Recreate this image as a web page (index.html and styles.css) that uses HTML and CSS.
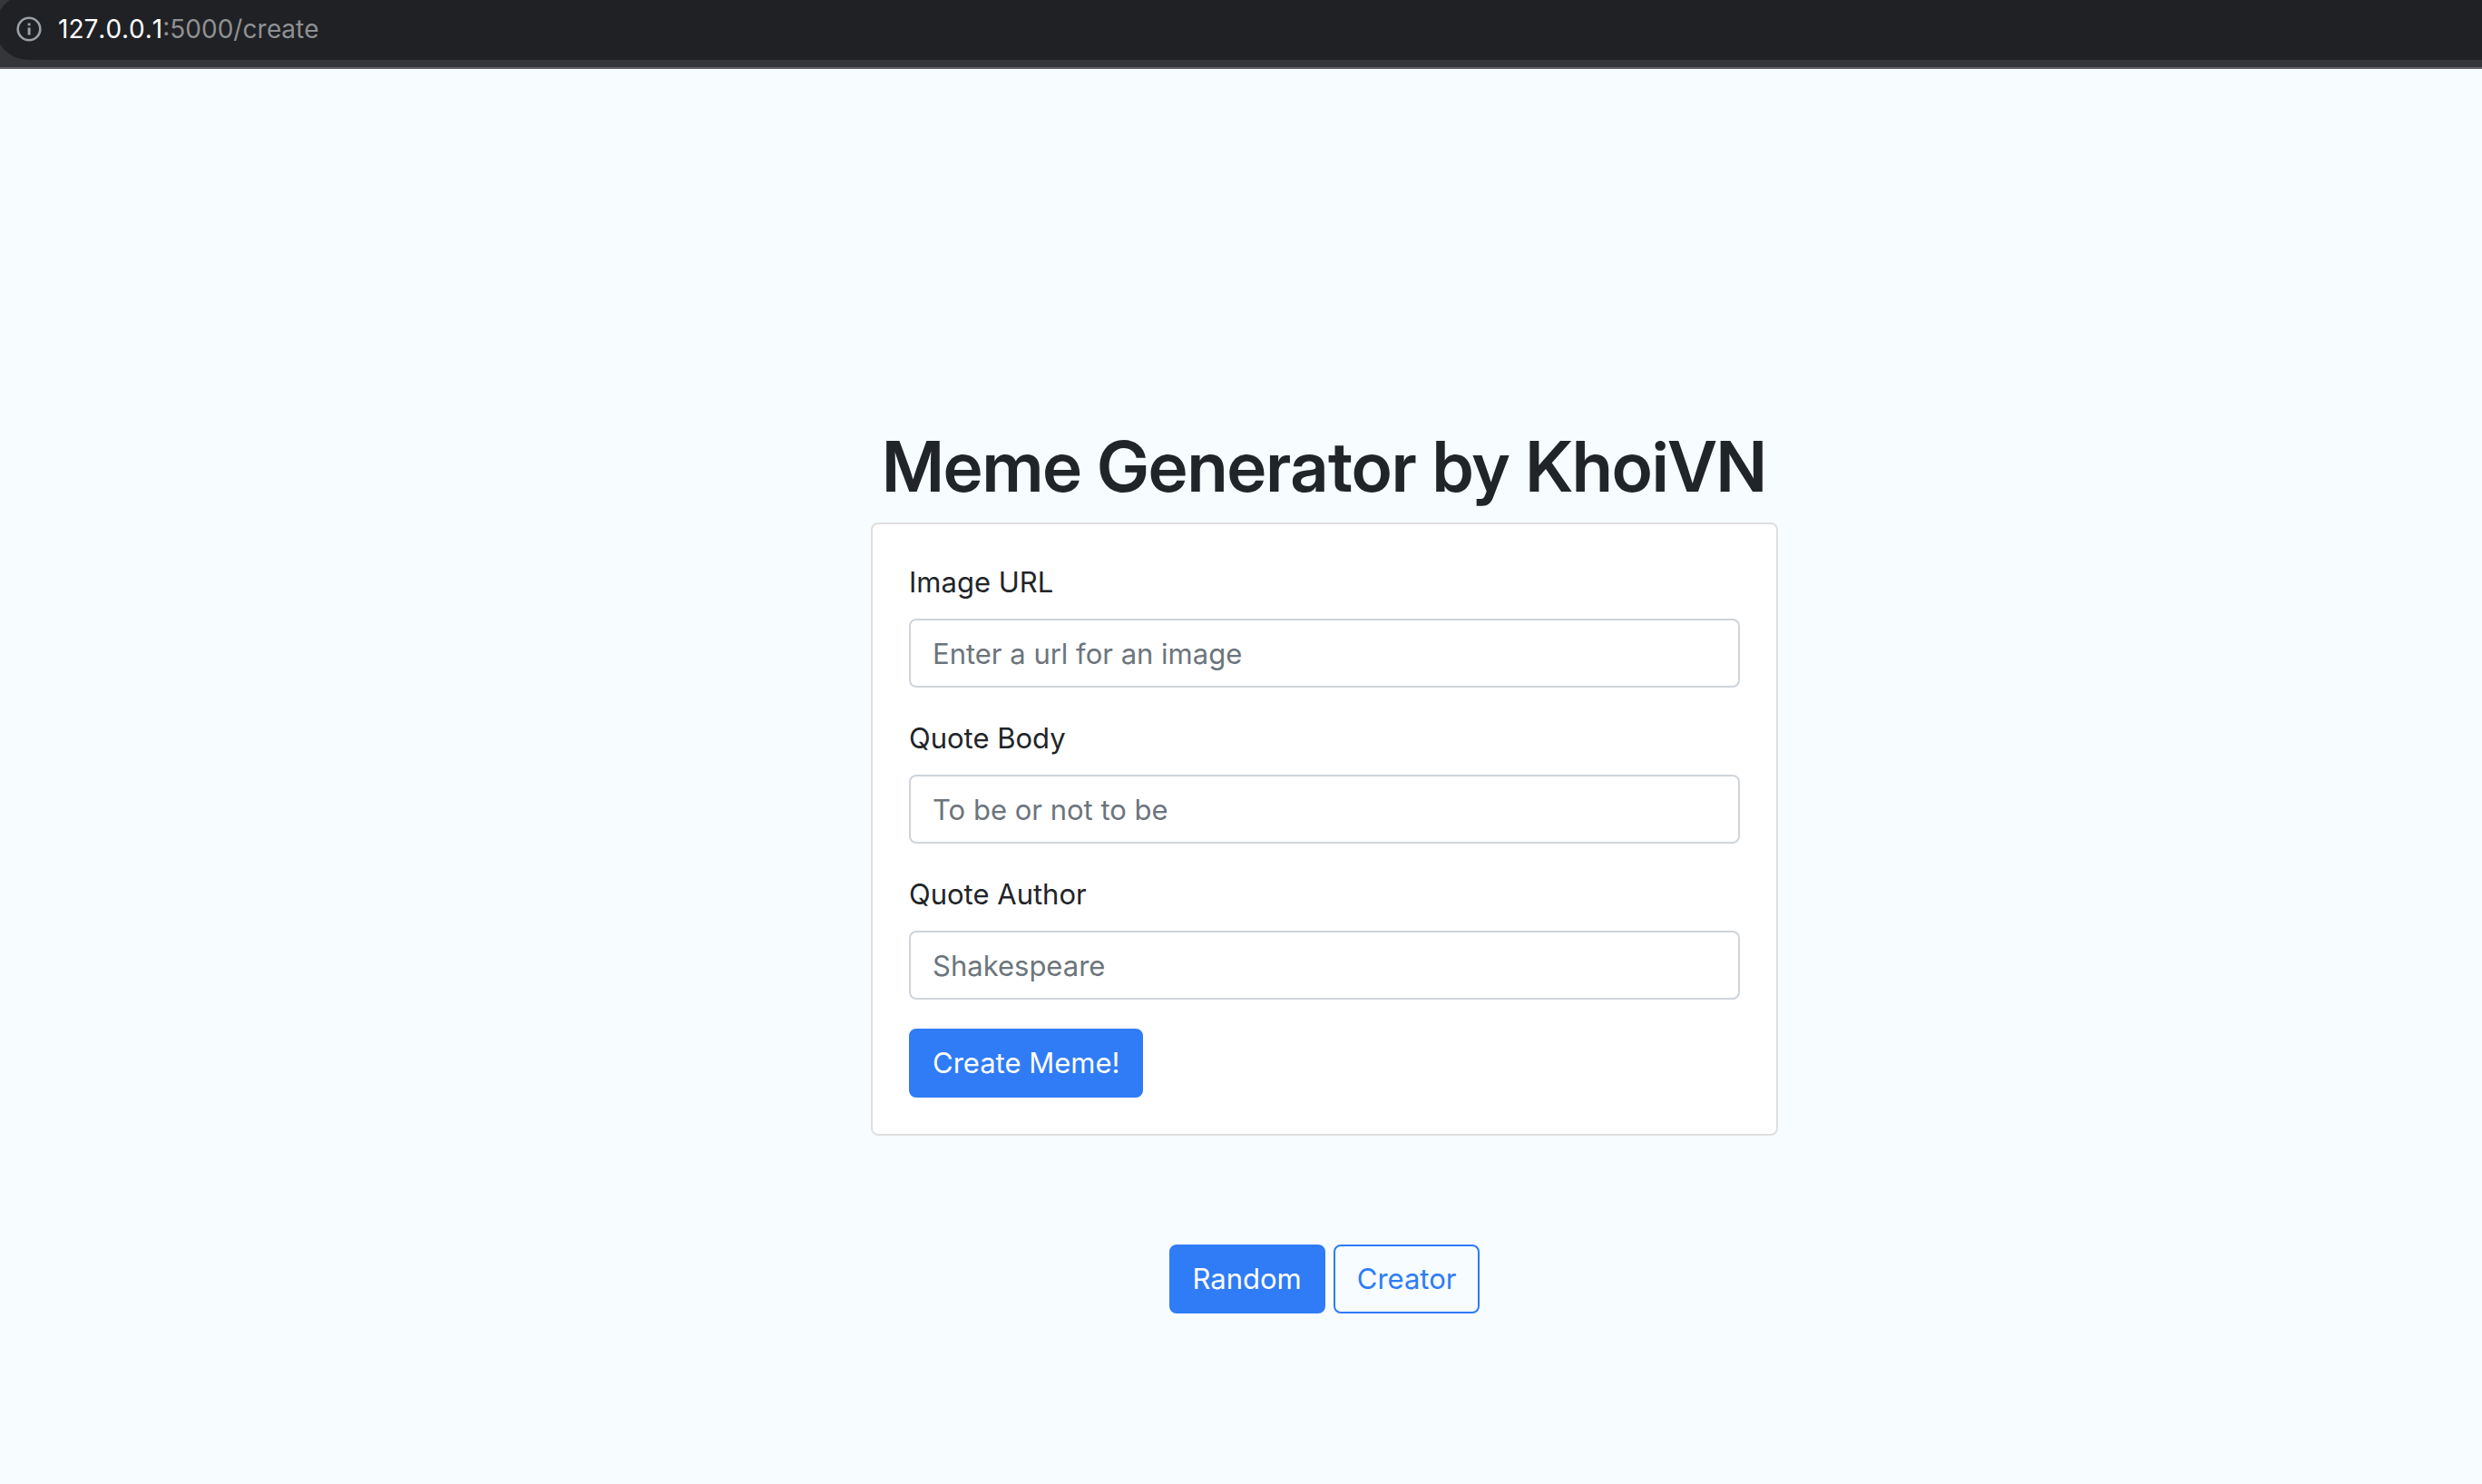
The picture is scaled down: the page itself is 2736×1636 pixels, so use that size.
FILE: index.html
```html
<!DOCTYPE html>
<html lang="en">
<head>
<meta charset="utf-8">
<title>Meme Generator</title>
<link rel="stylesheet" href="styles.css">
</head>
<body>
<header class="toolbar">
  <div class="address">
    <svg class="address-icon" viewBox="0 0 28 28" aria-hidden="true">
      <circle cx="14" cy="14" r="12.3" fill="none" stroke="#9aa0a6" stroke-width="2.6"/>
      <path d="M12.6 12.4h3v8h-3zM12.6 7.4h3v2.8h-3z" fill="#9aa0a6"/>
    </svg>
    <span class="address-text"><span class="host">127.0.0.1</span>:5000/create</span>
  </div>
</header>
<main class="page">
  <h1 class="title">Meme Generator by KhoiVN</h1>
  <form class="card">
    <div class="group">
      <label for="image-url">Image URL</label>
      <input class="control" id="image-url" type="text" placeholder="Enter a url for an image">
    </div>
    <div class="group">
      <label for="body">Quote Body</label>
      <input class="control" id="body" type="text" placeholder="To be or not to be">
    </div>
    <div class="group">
      <label for="author">Quote Author</label>
      <input class="control" id="author" type="text" placeholder="Shakespeare">
    </div>
    <button class="btn btn-primary" type="button">Create Meme!</button>
  </form>
  <nav class="links">
    <a class="btn btn-primary" href="#random">Random</a>
    <a class="btn btn-outline" href="#create">Creator</a>
  </nav>
</main>
</body>
</html>
```
FILE: styles.css
```css
* { box-sizing: border-box; }

body {
  margin: 0;
  background: #f6fcff;
  color: #212529;
  font-family: Inter, "Liberation Sans", sans-serif;
  font-size: 31px;
  line-height: 48px;
}

.toolbar {
  height: 76px;
  overflow: hidden;
  background: #35363a;
  border-bottom: 2px solid #5f5e63;
}

.address {
  display: flex;
  align-items: center;
  gap: 18px;
  height: 72px;
  margin: -6px 0 0 -5px;
  padding: 4px 0 0 23px;
  border-radius: 36px 0 0 36px;
  background: #202124;
  color: #8f9093;
  font-size: 28px;
  font-kerning: none;
  line-height: 32px;
}

.address-icon { width: 28px; height: 28px; }
.host { color: #fff; }

.page {
  display: flex;
  flex-direction: column;
  align-items: center;
  padding: 390px 0 80px 184px;
}

.title {
  margin: 0 0 14px;
  font-family: "Inter Display", Inter, "Liberation Sans", sans-serif;
  font-size: 77px;
  font-weight: 600;
  line-height: 96px;
}

.card {
  width: 100%;
  max-width: 1000px;
  padding: 40px;
  border: 2px solid #dfdfdf;
  border-radius: 8px;
  background: #fff;
}

.group {
  display: flex;
  flex-direction: column;
  gap: 16px;
  margin-bottom: 32px;
}

.control {
  width: 100%;
  height: 76px;
  padding: 12px 24px;
  border: 2px solid #ced4da;
  border-radius: 8px;
  background: #fff;
  color: #495057;
  font: inherit;
}

.control::placeholder { color: #6c757d; opacity: 1; }

.btn {
  display: inline-block;
  padding: 12px 24px;
  border: 2px solid #2f7cf6;
  border-radius: 8px;
  font: inherit;
  text-decoration: none;
  white-space: nowrap;
}

.btn-primary { background: #2f7cf6; color: #fff; }
.btn-outline { background: transparent; color: #2f7cf6; }

.card .btn { display: block; }

.links {
  display: flex;
  gap: 9px;
  margin-top: 120px;
}
```
